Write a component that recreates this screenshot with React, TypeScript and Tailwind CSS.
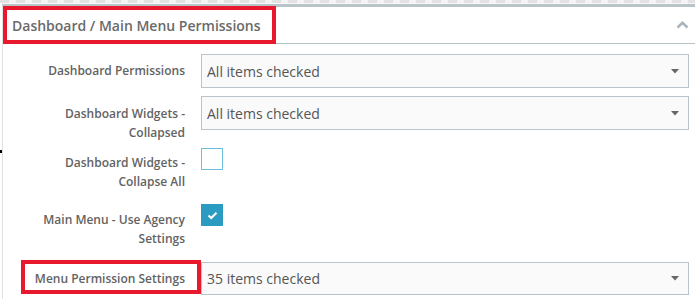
import React from "react";

function Select({ text }: { text: string }) {
  return (
    <div className="flex h-full w-[488px] items-center justify-between border border-[#b8c4ca] bg-[#fafafa] pl-[5px] pr-[9px] text-[14px] font-normal text-[#555]">
      <span>{text}</span>
      <svg width="8" height="5" viewBox="0 0 8 5">
        <polygon points="0,0 8,0 4,4.5" fill="#666" />
      </svg>
    </div>
  );
}

export default function App() {
  return (
    <div
      className="relative h-[299px] w-[695px] overflow-hidden bg-white"
      style={{ fontFamily: '"Open Sans", "Liberation Sans", sans-serif' }}
    >
      <div className="h-[3px] bg-[repeating-linear-gradient(90deg,#e2e2e2_0_9px,#f3f3f3_9px_16px)]" />
      <div className="h-[1px] bg-[#f8f8f8]" />
      <div className="ml-[2px] h-[295px] border-l border-t-[3px] border-[#e2e2e2] border-t-[#b9c4c9]">
        <div className="flex h-[37px] items-center justify-between border-b border-[#b9c4c9] pl-[9px] pr-[6px]">
          <span className="text-[14px] font-semibold text-[#6a6a6a]">
            Dashboard / Main Menu Permissions
          </span>
          <svg width="13" height="8" viewBox="0 0 13 8">
            <polyline points="1.5,6.5 6.5,1.8 11.5,6.5" fill="none" stroke="#a9b5bc" strokeWidth="2.6" />
          </svg>
        </div>

        <div className="text-[12px] font-semibold leading-[19px] text-[#636363]">
          <div className="mt-[10px] flex h-[34px] gap-[16px]">
            <div className="w-[182px] pt-[7px] text-right">Dashboard Permissions</div>
            <Select text="All items checked" />
          </div>
          <div className="mt-[8px] flex h-[45px] gap-[16px]">
            <div className="w-[182px] pt-[8px] text-right">
              Dashboard Widgets -<br />Collapsed
            </div>
            <div className="h-[34px]">
              <Select text="All items checked" />
            </div>
          </div>
          <div className="mt-[7px] flex h-[44px] gap-[16px]">
            <div className="w-[182px] pt-[5px] text-right">
              Dashboard Widgets -<br />Collapse All
            </div>
            <div className="h-[22px] w-[22px] border border-[#6cc0dc] bg-white" />
          </div>
          <div className="mt-[12px] flex h-[44px] gap-[16px]">
            <div className="w-[182px] pt-[6px] text-right">
              Main Menu - Use Agency<br />Settings
            </div>
            <div className="flex h-[22px] w-[22px] items-center justify-center bg-[#2c9bc1]">
              <svg width="11" height="9" viewBox="0 0 11 9">
                <polyline points="1.5,4.5 4.2,7 9.5,1.8" fill="none" stroke="white" strokeWidth="2" />
              </svg>
            </div>
          </div>
          <div className="relative mt-[14px] flex h-[33px] gap-[16px]">
            <div className="w-[182px] pt-[7px] text-right">Menu Permission Settings</div>
            <Select text="35 items checked" />
            <div className="absolute left-[18px] top-[-2px] h-[34px] w-[180px] border-4 border-[#e8192c]" />
          </div>
        </div>
      </div>
      <div className="absolute left-[3px] top-[6px] h-[38px] w-[273px] border-4 border-[#e8192c]" />
      <div className="absolute left-0 top-[150px] h-[3px] w-[2px] bg-black" />
    </div>
  );
}
